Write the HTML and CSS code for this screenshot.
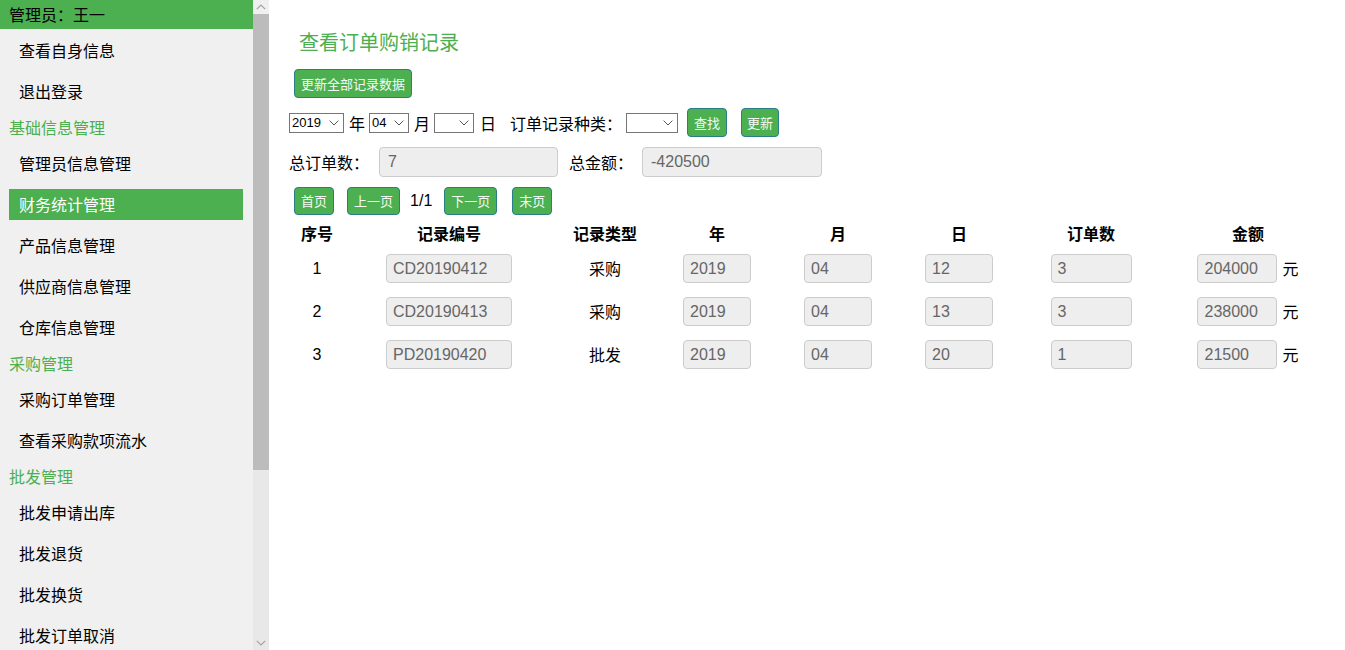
FILE: index.html
```html
<!DOCTYPE html>
<html lang="zh-CN">
<head>
<meta charset="utf-8">
<title>查看订单购销记录</title>
<link rel="stylesheet" href="styles.css">
</head>
<body>
<aside class="sidebar">
  <div class="side-content">
    <div class="side-head">管理员：王一</div>
    <ul class="side-list">
      <li class="item">查看自身信息</li>
      <li class="item">退出登录</li>
      <li class="group">基础信息管理</li>
      <li class="item">管理员信息管理</li>
      <li class="item active">财务统计管理</li>
      <li class="item">产品信息管理</li>
      <li class="item">供应商信息管理</li>
      <li class="item">仓库信息管理</li>
      <li class="group">采购管理</li>
      <li class="item">采购订单管理</li>
      <li class="item">查看采购款项流水</li>
      <li class="group">批发管理</li>
      <li class="item">批发申请出库</li>
      <li class="item">批发退货</li>
      <li class="item">批发换货</li>
      <li class="item">批发订单取消</li>
    </ul>
  </div>
  <div class="scrollbar">
    <div class="sb-btn sb-up">
      <svg width="10" height="6" viewBox="0 0 10 6"><path d="M0.8 5.2 L5 1 L9.2 5.2" fill="none" stroke="#a3a3a3" stroke-width="1.2"/></svg>
    </div>
    <div class="sb-thumb"></div>
    <div class="sb-track"></div>
    <div class="sb-btn sb-down">
      <svg width="10" height="6" viewBox="0 0 10 6"><path d="M0.8 0.8 L5 5 L9.2 0.8" fill="none" stroke="#a3a3a3" stroke-width="1.2"/></svg>
    </div>
  </div>
</aside>
<main class="main">
  <h3 class="title">查看订单购销记录</h3>
  <div class="row row-top">
    <button class="btn">更新全部记录数据</button>
  </div>
  <div class="row row-filter">
    <select class="sel sel-year"><option>2019</option></select>
    <span class="lbl l-year">年</span>
    <select class="sel sel-month"><option>04</option></select>
    <span class="lbl l-month">月</span>
    <select class="sel sel-day"><option></option></select>
    <span class="lbl l-day">日</span>
    <span class="lbl l-kind">订单记录种类：</span>
    <select class="sel sel-kind"><option></option></select>
    <button class="btn b-find">查找</button>
    <button class="btn b-upd">更新</button>
  </div>
  <div class="row row-sum">
    <span class="lbl">总订单数：</span>
    <input class="field f-count" value="7" disabled>
    <span class="lbl l-total">总金额：</span>
    <input class="field f-total" value="-420500" disabled>
  </div>
  <div class="row row-page">
    <button class="btn pb b-first">首页</button>
    <button class="btn pb b-prev">上一页</button>
    <span class="pageno">1/1</span>
    <button class="btn pb b-next">下一页</button>
    <button class="btn pb b-last">末页</button>
  </div>
  <table class="records">
    <colgroup>
      <col class="c1"><col class="c2"><col class="c3"><col class="c4">
      <col class="c5"><col class="c6"><col class="c7"><col class="c8">
    </colgroup>
    <thead>
      <tr><th>序号</th><th>记录编号</th><th>记录类型</th><th>年</th><th>月</th><th>日</th><th>订单数</th><th>金额</th></tr>
    </thead>
    <tbody>
      <tr>
        <td>1</td>
        <td><input class="field t-code" value="CD20190412" disabled></td>
        <td class="cn">采购</td>
        <td><input class="field t-date" value="2019" disabled></td>
        <td><input class="field t-date" value="04" disabled></td>
        <td><input class="field t-date" value="12" disabled></td>
        <td><input class="field t-num" value="3" disabled></td>
        <td class="amt"><input class="field t-amt" value="204000" disabled><span class="unit">元</span></td>
      </tr>
      <tr>
        <td>2</td>
        <td><input class="field t-code" value="CD20190413" disabled></td>
        <td class="cn">采购</td>
        <td><input class="field t-date" value="2019" disabled></td>
        <td><input class="field t-date" value="04" disabled></td>
        <td><input class="field t-date" value="13" disabled></td>
        <td><input class="field t-num" value="3" disabled></td>
        <td class="amt"><input class="field t-amt" value="238000" disabled><span class="unit">元</span></td>
      </tr>
      <tr>
        <td>3</td>
        <td><input class="field t-code" value="PD20190420" disabled></td>
        <td class="cn">批发</td>
        <td><input class="field t-date" value="2019" disabled></td>
        <td><input class="field t-date" value="04" disabled></td>
        <td><input class="field t-date" value="20" disabled></td>
        <td><input class="field t-num" value="1" disabled></td>
        <td class="amt"><input class="field t-amt" value="21500" disabled><span class="unit">元</span></td>
      </tr>
    </tbody>
  </table>
</main>
</body>
</html>
```

FILE: styles.css
```css
* { box-sizing: border-box; }

html, body {
  margin: 0;
  padding: 0;
  height: 100%;
}

body {
  display: flex;
  overflow: hidden;
  font-family: "Liberation Sans", "Noto Sans CJK SC", sans-serif;
  font-size: 16px;
  color: #000;
  background: #fff;
}

/* ---------- sidebar ---------- */
.sidebar {
  flex: 0 0 269px;
  width: 269px;
  height: 100vh;
  display: flex;
  background: #f0f0f0;
  font-family: "Noto Sans CJK SC", sans-serif;
}

.side-content {
  flex: 0 0 253px;
  width: 253px;
  height: 100%;
  overflow: hidden;
}

.scrollbar {
  flex: 0 0 16px;
  width: 16px;
  height: 100%;
  display: flex;
  flex-direction: column;
  background: #e8e8e8;
}

.sb-btn {
  flex: 0 0 14px;
  height: 14px;
  display: flex;
  align-items: center;
  justify-content: center;
}

.sb-up { background: #f0f0f0; }
.sb-down { background: #e8e8e8; margin-top: auto; }

.sb-thumb {
  flex: 0 0 456px;
  height: 456px;
  background: #bcbcbc;
}

.sb-track {
  flex: 1;
  background: #e8e8e8;
}

.side-head {
  height: 29px;
  line-height: 29px;
  padding-left: 9px;
  background: #4caf50;
  color: #000;
  font-size: 16px;
}

.side-list {
  list-style: none;
  margin: 0;
  padding: 6px 0 0;
  display: flex;
  flex-direction: column;
  gap: 10px;
}

.side-list .item {
  height: 31px;
  line-height: 31px;
  margin: 0 10px 0 9px;
  padding-left: 10px;
  font-size: 16px;
  color: #000;
}

.side-list .item.active {
  background: #4caf50;
  color: #fff;
}

.side-list .group {
  height: 21px;
  line-height: 21px;
  padding-left: 9px;
  font-size: 16px;
  color: #4caf50;
}

/* ---------- main ---------- */
.main {
  flex: 1;
  padding: 0 0 0 20px;
}

.title {
  margin: 28px 0 0 10px;
  height: 28px;
  line-height: 28px;
  font-size: 20px;
  font-weight: normal;
  color: #4caf50;
  font-family: "Noto Sans CJK SC", sans-serif;
}

.row {
  display: flex;
  align-items: center;
}

.row-top { margin-top: 13px; height: 29px; padding-left: 5px; }
.row-filter { margin-top: 10px; height: 29px; }
.row-sum { margin-top: 10px; height: 30px; }
.row-page { margin-top: 10px; height: 28px; padding-left: 5px; }

.btn {
  height: 29px;
  padding: 0 6px;
  border: 1px solid #2b7d86;
  border-radius: 4px;
  background: #4caf50;
  color: #f4fbf4;
  font-family: "Noto Sans CJK SC", sans-serif;
  font-size: 13px;
  line-height: 27px;
  cursor: pointer;
}

.btn.pb { height: 28px; line-height: 26px; }

.lbl {
  font-family: "Noto Sans CJK SC", sans-serif;
  font-size: 16px;
  line-height: 20px;
}

.sel {
  -webkit-appearance: none;
  appearance: none;
  height: 20px;
  font-family: "Liberation Sans", sans-serif;
  font-size: 13px;
  line-height: 18px;
  border: 1px solid #767676;
  border-radius: 0;
  background-color: #fff;
  background-image: url("data:image/svg+xml;utf8,<svg xmlns='http://www.w3.org/2000/svg' width='10' height='6'><path d='M0.6 0.6 L5 5 L9.4 0.6' fill='none' stroke='%23555555' stroke-width='1'/></svg>");
  background-repeat: no-repeat;
  background-position: right 4px center;
  color: #000;
  padding: 0 0 0 2px;
}

.sel-year { width: 55px; }
.sel-month { width: 40px; margin-left: 4px; }
.sel-day { width: 40px; margin-left: 4px; }
.sel-kind { width: 52px; margin-left: 4px; }
.l-year { margin-left: 5px; }
.l-month { margin-left: 5px; }
.l-day { margin-left: 6px; }
.l-kind { margin-left: 14px; }
.b-find { margin-left: 9px; }
.b-upd { margin-left: 14px; padding: 0 5px; }

.field {
  height: 29px;
  padding: 0 6px;
  border: 1px solid #cccccc;
  border-radius: 4px;
  background: #eeeeee;
  color: #666;
  font-family: "Liberation Sans", sans-serif;
  font-size: 16px;
  vertical-align: middle;
  -webkit-text-fill-color: #666;
  opacity: 1;
}

.f-count { width: 179px; height: 30px; margin-left: 10px; padding-left: 8px; }
.l-total { margin-left: 11px; }
.f-total { width: 180px; height: 30px; margin-left: 9px; padding-left: 8px; }

.b-prev { margin-left: 13px; }
.pageno {
  margin-left: 10px;
  margin-right: 12px;
  font-size: 16px;
}
.b-last { margin-left: 15px; }

/* ---------- table ---------- */
.records {
  margin-top: 4px;
  border-collapse: collapse;
  table-layout: fixed;
  width: 1044px;
}

.c1 { width: 56px; }
.c2 { width: 208px; }
.c3 { width: 104px; }
.c4 { width: 120px; }
.c5 { width: 122px; }
.c6 { width: 120px; }
.c7 { width: 144px; }
.c8 { width: 170px; }

.records th {
  height: 28px;
  padding: 0;
  font-family: "Noto Sans CJK SC", sans-serif;
  font-weight: bold;
  font-size: 16px;
  text-align: center;
  vertical-align: middle;
}

.records td {
  height: 43px;
  padding: 0;
  text-align: center;
  vertical-align: middle;
  font-size: 16px;
}

.records td.cn { padding-bottom: 1px; }

.records td.amt {
  white-space: nowrap;
}

.t-code { width: 126px; }
.t-date { width: 68px; }
.t-num { width: 81px; }
.t-amt { width: 80px; }

.unit {
  display: inline-block;
  margin-left: 5px;
  font-family: "Noto Sans CJK SC", sans-serif;
  line-height: 20px;
  vertical-align: middle;
  position: relative;
  top: -1px;
}
```
